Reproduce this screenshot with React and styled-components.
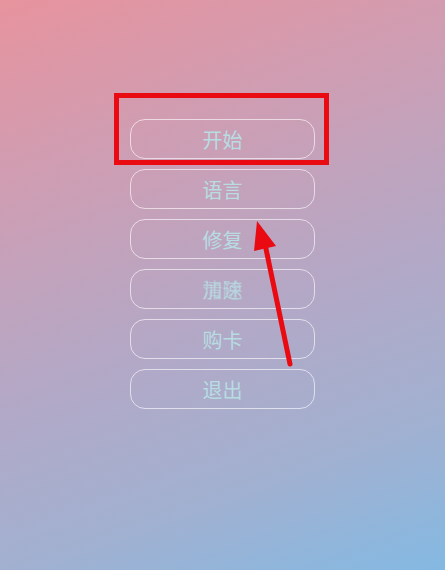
import styled, { createGlobalStyle } from 'styled-components'

const GlobalStyle = createGlobalStyle`
html, body {
  margin: 0;
  padding: 0;
}
body {
  font-family: "Noto Sans CJK SC", "Noto Sans", sans-serif;
}
`

const Screen = styled.div`
position: relative;
width: 445px;
height: 570px;
overflow: hidden;
background: linear-gradient(160deg, #e7939d 0%, #cd9eb4 28%, #b3a8c6 55%, #a2b0d0 78%, #84b9e2 100%);
`

const Menu = styled.div`
display: flex;
flex-direction: column;
align-items: center;
gap: 10px;
padding-top: 119px;
padding-left: 0;
`

const MenuButton = styled.button`
position: relative;
box-sizing: border-box;
width: 185px;
height: 40px;
margin-left: 0;
border: 1.5px solid rgba(255, 255, 255, 0.62);
border-radius: 15px;
background: transparent;
color: #b7dde2;
font-family: "Noto Sans CJK SC", sans-serif;
font-size: 20px;
display: flex;
align-items: center;
justify-content: center;
padding: 0;
`

const Ghost = styled.span`
position: absolute;
left: 0;
right: 0;
text-align: center;
opacity: ${p => p.$fade};
`

const Highlight = styled.div`
position: absolute;
left: 114px;
top: 93px;
width: 215px;
height: 72px;
box-sizing: border-box;
border: 5px solid #ea0a12;
`

const Arrow = styled.svg`
position: absolute;
left: 0;
top: 0;
pointer-events: none;
`

const items = ['开始', '语言', '修复', null, '购卡', '退出']

function App() {
  return (
    <>
      <GlobalStyle />
      <Screen>
        <Menu>
          {items.map((label, i) =>
            label ? (
              <MenuButton key={i}>{label}</MenuButton>
            ) : (
              <MenuButton key={i}>
                <Ghost $fade={0.75}>加速</Ghost>
                <Ghost $fade={0.6}>清除</Ghost>
              </MenuButton>
            )
          )}
        </Menu>
        <Highlight />
        <Arrow width="445" height="570" viewBox="0 0 445 570">
          <line x1="290" y1="364" x2="265" y2="244" stroke="#ea0a12" strokeWidth="5" strokeLinecap="round" />
          <polygon points="257,221 276,246 254,251" fill="#ea0a12" />
        </Arrow>
      </Screen>
    </>
  )
}

export default App
